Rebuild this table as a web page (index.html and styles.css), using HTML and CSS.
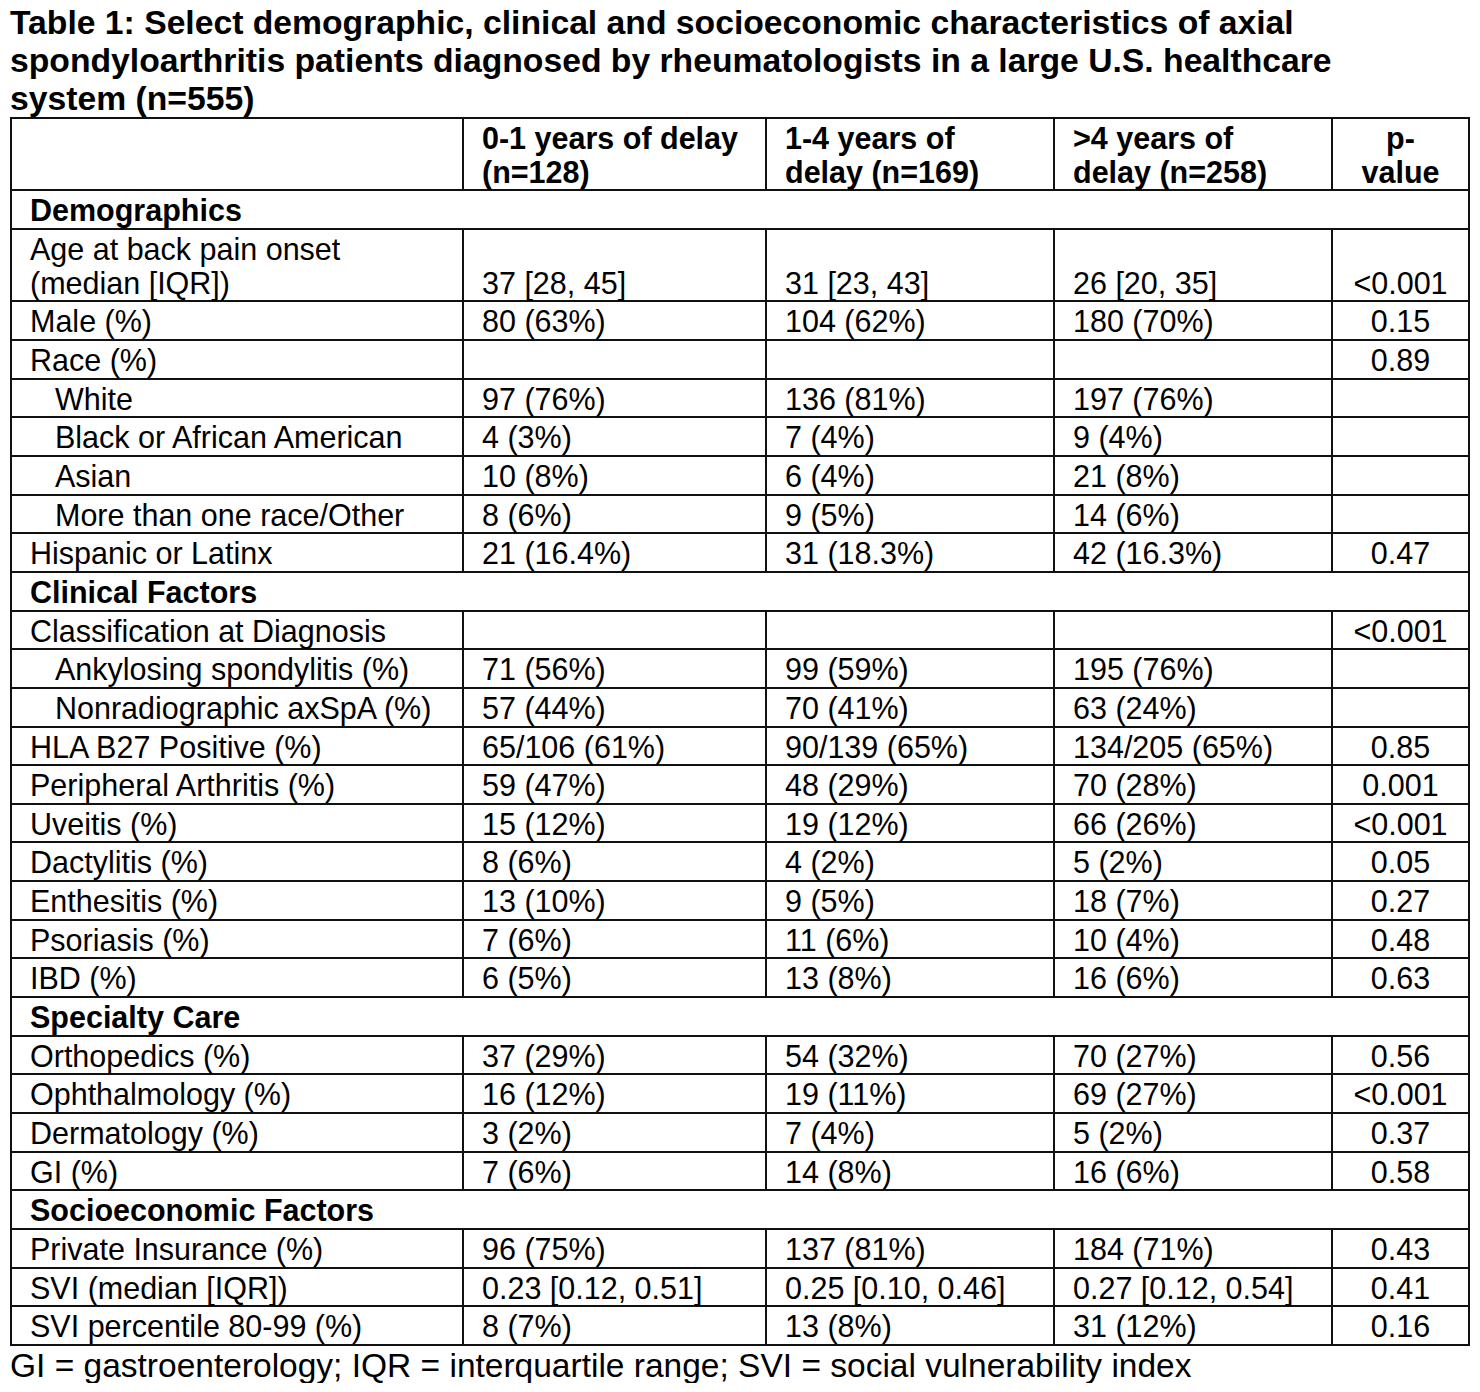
FILE: index.html
```html
<!DOCTYPE html>
<html lang="en">
<head>
<meta charset="utf-8">
<title>Table 1</title>
<link rel="stylesheet" href="styles.css">
</head>
<body>
<h1 class="title">Table 1: Select demographic, clinical and socioeconomic characteristics of axial<br>spondyloarthritis patients diagnosed by rheumatologists in a large U.S. healthcare<br>system (n=555)</h1>
<table class="data">
  <colgroup>
    <col class="c1"><col class="c2"><col class="c3"><col class="c4"><col class="c5">
  </colgroup>
  <thead>
    <tr class="head">
      <th></th>
      <th>0-1 years of delay<br>(n=128)</th>
      <th>1-4 years of<br>delay (n=169)</th>
      <th>&gt;4 years of<br>delay (n=258)</th>
      <th class="p">p-<br>value</th>
    </tr>
  </thead>
  <tbody>
    <tr class="section"><td colspan="5">Demographics</td></tr>
    <tr class="bottom"><td>Age at back pain onset<br>(median [IQR])</td><td>37 [28, 45]</td><td>31 [23, 43]</td><td>26 [20, 35]</td><td class="p">&lt;0.001</td></tr>
    <tr><td>Male (%)</td><td>80 (63%)</td><td>104 (62%)</td><td>180 (70%)</td><td class="p">0.15</td></tr>
    <tr><td>Race (%)</td><td></td><td></td><td></td><td class="p">0.89</td></tr>
    <tr><td class="ind">White</td><td>97 (76%)</td><td>136 (81%)</td><td>197 (76%)</td><td class="p"></td></tr>
    <tr><td class="ind">Black or African American</td><td>4 (3%)</td><td>7 (4%)</td><td>9 (4%)</td><td class="p"></td></tr>
    <tr><td class="ind">Asian</td><td>10 (8%)</td><td>6 (4%)</td><td>21 (8%)</td><td class="p"></td></tr>
    <tr><td class="ind">More than one race/Other</td><td>8 (6%)</td><td>9 (5%)</td><td>14 (6%)</td><td class="p"></td></tr>
    <tr><td>Hispanic or Latinx</td><td>21 (16.4%)</td><td>31 (18.3%)</td><td>42 (16.3%)</td><td class="p">0.47</td></tr>
    <tr class="section"><td colspan="5">Clinical Factors</td></tr>
    <tr><td>Classification at Diagnosis</td><td></td><td></td><td></td><td class="p">&lt;0.001</td></tr>
    <tr><td class="ind">Ankylosing spondylitis (%)</td><td>71 (56%)</td><td>99 (59%)</td><td>195 (76%)</td><td class="p"></td></tr>
    <tr><td class="ind">Nonradiographic axSpA (%)</td><td>57 (44%)</td><td>70 (41%)</td><td>63 (24%)</td><td class="p"></td></tr>
    <tr><td>HLA B27 Positive (%)</td><td>65/106 (61%)</td><td>90/139 (65%)</td><td>134/205 (65%)</td><td class="p">0.85</td></tr>
    <tr><td>Peripheral Arthritis (%)</td><td>59 (47%)</td><td>48 (29%)</td><td>70 (28%)</td><td class="p">0.001</td></tr>
    <tr><td>Uveitis (%)</td><td>15 (12%)</td><td>19 (12%)</td><td>66 (26%)</td><td class="p">&lt;0.001</td></tr>
    <tr><td>Dactylitis (%)</td><td>8 (6%)</td><td>4 (2%)</td><td>5 (2%)</td><td class="p">0.05</td></tr>
    <tr><td>Enthesitis (%)</td><td>13 (10%)</td><td>9 (5%)</td><td>18 (7%)</td><td class="p">0.27</td></tr>
    <tr><td>Psoriasis (%)</td><td>7 (6%)</td><td>11 (6%)</td><td>10 (4%)</td><td class="p">0.48</td></tr>
    <tr><td>IBD (%)</td><td>6 (5%)</td><td>13 (8%)</td><td>16 (6%)</td><td class="p">0.63</td></tr>
    <tr class="section"><td colspan="5">Specialty Care</td></tr>
    <tr><td>Orthopedics (%)</td><td>37 (29%)</td><td>54 (32%)</td><td>70 (27%)</td><td class="p">0.56</td></tr>
    <tr><td>Ophthalmology (%)</td><td>16 (12%)</td><td>19 (11%)</td><td>69 (27%)</td><td class="p">&lt;0.001</td></tr>
    <tr><td>Dermatology (%)</td><td>3 (2%)</td><td>7 (4%)</td><td>5 (2%)</td><td class="p">0.37</td></tr>
    <tr><td>GI (%)</td><td>7 (6%)</td><td>14 (8%)</td><td>16 (6%)</td><td class="p">0.58</td></tr>
    <tr class="section"><td colspan="5">Socioeconomic Factors</td></tr>
    <tr><td>Private Insurance (%)</td><td>96 (75%)</td><td>137 (81%)</td><td>184 (71%)</td><td class="p">0.43</td></tr>
    <tr><td>SVI (median [IQR])</td><td>0.23 [0.12, 0.51]</td><td>0.25 [0.10, 0.46]</td><td>0.27 [0.12, 0.54]</td><td class="p">0.41</td></tr>
    <tr><td>SVI percentile 80-99 (%)</td><td>8 (7%)</td><td>13 (8%)</td><td>31 (12%)</td><td class="p">0.16</td></tr>
  </tbody>
</table>
<p class="note">GI = gastroenterology; IQR = interquartile range; SVI = social vulnerability index</p>
</body>
</html>
```

FILE: styles.css
```css
html, body {
  background: #ffffff;
}

body {
  margin: 0;
  padding: 3px 10px 0 10px;
  color: #000000;
  font-family: "Liberation Sans", Arial, sans-serif;
}

.title {
  margin: 0;
  font-size: 33.7px;
  line-height: 38px;
  font-weight: bold;
  white-space: nowrap;
}

.data {
  border-collapse: collapse;
  table-layout: fixed;
  width: 1458px;
  font-size: 30.5px;
  line-height: 33.65px;
}

.c1 { width: 452px; }
.c2 { width: 303px; }
.c3 { width: 288px; }
.c4 { width: 278px; }
.c5 { width: 137px; }

.data th,
.data td {
  border: 2px solid #111111;
  padding: 3px 18px 0 18px;
  text-align: left;
  vertical-align: top;
  white-space: nowrap;
}

.data th {
  font-weight: bold;
}

.data .p {
  text-align: center;
  padding-left: 4px;
  padding-right: 4px;
}

.data .section td {
  font-weight: bold;
}

.data .ind {
  padding-left: 43px;
}

.data .bottom td {
  vertical-align: bottom;
}

.data .bottom td:first-child {
  vertical-align: top;
}

.note {
  margin: 0;
  padding-top: 3px;
  font-size: 33.5px;
  line-height: 33.5px;
  white-space: nowrap;
}
```
